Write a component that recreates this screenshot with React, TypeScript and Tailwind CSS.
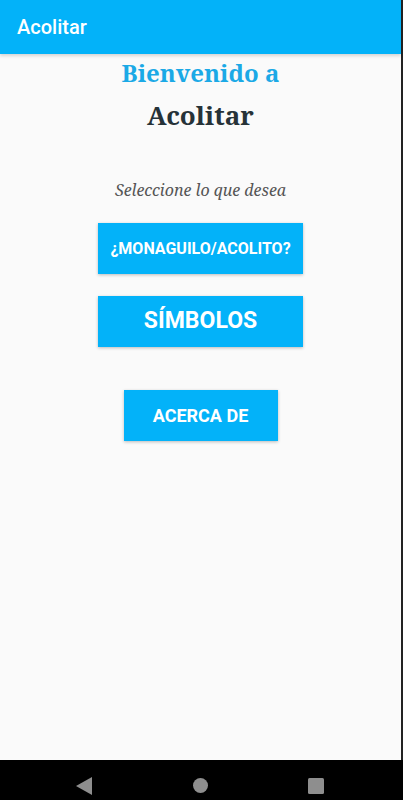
const serif = { fontFamily: '"Noto Serif", "DejaVu Serif", "Liberation Serif", serif' }

function MenuButton({ label, className }: { label: string; className: string }) {
  return (
    <button
      className={`flex items-center justify-center bg-[#03b2f9] text-white font-bold shadow-[0_1px_3px_rgba(0,0,0,0.25)] font-['Roboto',sans-serif] ${className}`}
    >
      {label}
    </button>
  )
}

export default function App() {
  return (
    <div className="flex flex-col h-[800px] w-[403px] overflow-hidden bg-black">
      <div className="flex flex-col flex-1 border-r-2 border-[#222]">
        <header className="flex items-center h-[54px] px-[17px] bg-[#03b2f9] shadow-[0_2px_3px_rgba(0,0,0,0.15)] z-10">
          <span className="text-white text-[20px] font-medium font-['Roboto',sans-serif]">Acolitar</span>
        </header>
        <main className="flex flex-col items-center flex-1 bg-[#fafafa]">
          <h1 className="mt-[2px] text-[24px] leading-[34px] font-bold text-[#1ba9e6]" style={serif}>
            Bienvenido a
          </h1>
          <h2 className="mt-[8px] text-[26px] leading-[34px] font-bold text-[#263238]" style={serif}>
            Acolitar
          </h2>
          <p className="mt-[46px] text-[16px] leading-[24px] italic text-[#555]" style={serif}>
            Seleccione lo que desea
          </p>
          <MenuButton label="¿MONAGUILO/ACOLITO?" className="mt-[21px] w-[205px] h-[51px] text-[16px]" />
          <MenuButton label="SÍMBOLOS" className="mt-[22px] w-[205px] h-[51px] text-[23px]" />
          <MenuButton label="ACERCA DE" className="mt-[43px] w-[154px] h-[51px] text-[18px]" />
        </main>
      </div>
      <nav className="flex items-center justify-between h-[40px] pt-[11px] pl-[76px] pr-[79px] bg-black">
        <svg width="16" height="18" viewBox="0 0 16 18">
          <path d="M16 0 L16 18 L0 9 Z" fill="#8e8e8e" />
        </svg>
        <svg width="15" height="15" viewBox="0 0 15 15">
          <circle cx="7.5" cy="7.5" r="7.5" fill="#8e8e8e" />
        </svg>
        <svg width="16" height="16" viewBox="0 0 16 16">
          <rect x="0" y="0" width="16" height="16" rx="1.5" fill="#8e8e8e" />
        </svg>
      </nav>
    </div>
  )
}
